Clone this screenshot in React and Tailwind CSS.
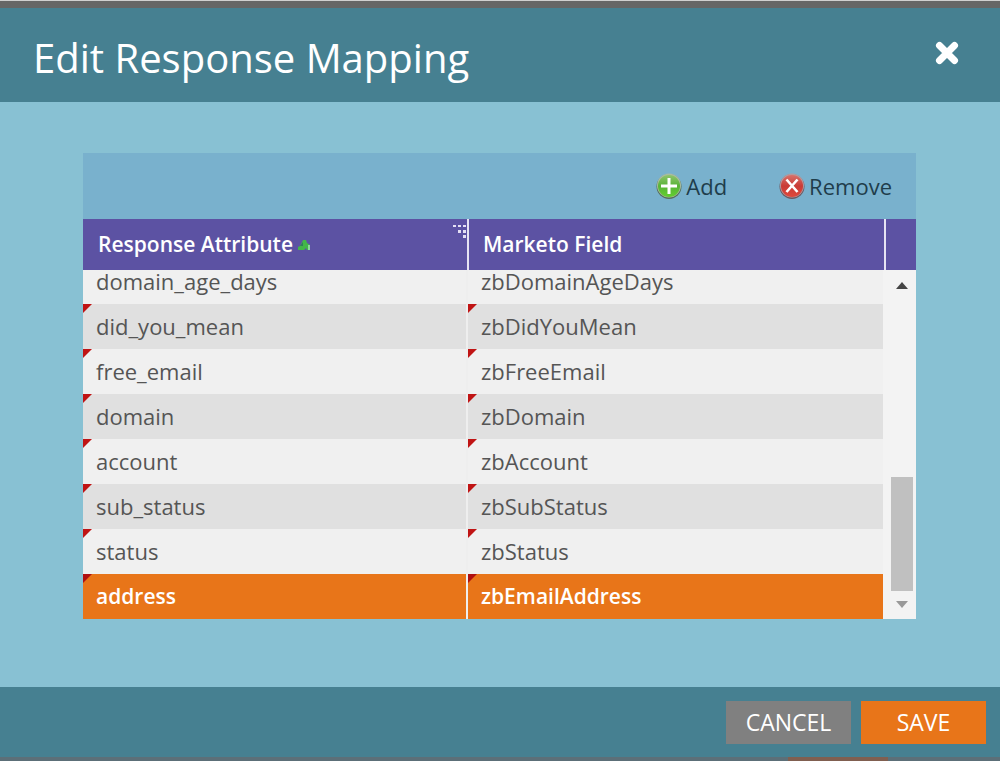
import { useState } from "react";

const mappings = [
  { attribute: "domain_age_days", field: "zbDomainAgeDays" },
  { attribute: "did_you_mean", field: "zbDidYouMean" },
  { attribute: "free_email", field: "zbFreeEmail" },
  { attribute: "domain", field: "zbDomain" },
  { attribute: "account", field: "zbAccount" },
  { attribute: "sub_status", field: "zbSubStatus" },
  { attribute: "status", field: "zbStatus" },
  { attribute: "address", field: "zbEmailAddress" },
];

function CloseIcon() {
  return (
    <svg viewBox="0 0 24 24" className="w-6 h-6" stroke="#fff" strokeWidth="7" strokeLinecap="round">
      <path d="M4.5 4.5l15 15M19.5 4.5l-15 15" />
    </svg>
  );
}

function AddIcon() {
  return (
    <svg viewBox="0 0 26 26" className="w-[26px] h-[26px]">
      <defs>
        <linearGradient id="addFill" x1="0" y1="0" x2="0" y2="1">
          <stop offset="0" stopColor="#8fc46c" />
          <stop offset="0.5" stopColor="#57b336" />
          <stop offset="1" stopColor="#63cf30" />
        </linearGradient>
      </defs>
      <circle cx="13" cy="13.5" r="12.5" fill="#56705a" />
      <circle cx="13" cy="12.5" r="12" fill="#a9bca0" />
      <circle cx="13" cy="13" r="11" fill="url(#addFill)" />
      <path d="M13 5v16M5 13h16" stroke="#fff" strokeWidth="3" />
    </svg>
  );
}

function RemoveIcon() {
  return (
    <svg viewBox="0 0 26 26" className="w-[26px] h-[26px]">
      <defs>
        <linearGradient id="removeFill" x1="0" y1="0" x2="0" y2="1">
          <stop offset="0" stopColor="#d9716a" />
          <stop offset="0.5" stopColor="#c93c36" />
          <stop offset="1" stopColor="#e0483c" />
        </linearGradient>
      </defs>
      <circle cx="13" cy="13.5" r="12.5" fill="#6d5860" />
      <circle cx="13" cy="12.5" r="12" fill="#b39a9f" />
      <circle cx="13" cy="13" r="11" fill="url(#removeFill)" />
      <path d="M7.5 6.5l11 12.5M18.5 6.5l-11 12.5" stroke="#fff" strokeWidth="2.6" />
    </svg>
  );
}

function SortIcon() {
  return (
    <svg viewBox="0 0 14 12" className="w-[14px] h-3">
      <path d="M1 11V8l2-1 3-6h3l1 3 3 2v5h-3l-1-2-2 2z" fill="#43b649" />
      <path d="M6 3l-3 4h3z" fill="#2f7d5c" />
      <path d="M11 6h2v5h-2z" fill="#8fd6a0" />
    </svg>
  );
}

function GripIcon() {
  return (
    <svg viewBox="0 0 15 15" className="w-[15px] h-[15px]" fill="#e4e0f4">
      <path d="M1 1h3v2H1zM6 1h3v2H6zM11 1h3v2h-3zM6 6h3v3H6zM11 6h3v3h-3zM11 11h3v3h-3z" />
    </svg>
  );
}

function Columns() {
  return (
    <colgroup>
      <col className="w-[48%]" />
      <col className="w-[52%]" />
    </colgroup>
  );
}

function Cell({ selected, className, children }) {
  return (
    <td className={`relative h-[45px] pl-[13px] pb-[2px] ${className}`}>
      <span
        className={`absolute left-0 top-0 w-[9px] h-[9px] [clip-path:polygon(0_0,100%_0,0_100%)] ${
          selected ? "bg-[#b01010]" : "bg-[#c01414]"
        }`}
      />
      {children}
    </td>
  );
}

function App() {
  const [selected, setSelected] = useState("address");

  return (
    <div className="min-h-screen flex flex-col bg-[#88c1d3] font-['Open_Sans','Noto_Sans',sans-serif]">
      <div className="h-2 bg-[#666666] border-t border-[#d0d0d0]" />

      {/* Header */}
      <header className="h-[94px] bg-[#468091] flex items-center justify-between pl-[33px] pr-[41px]">
        <h1 className="text-[40px] leading-[48px] text-white pt-[6px]">Edit Response Mapping</h1>
        <button type="button" aria-label="Close" className="mb-1">
          <CloseIcon />
        </button>
      </header>

      {/* Mapping grid */}
      <main className="flex-1 pt-[51px] pb-[68px] pl-[83px] pr-[84px]">
        <div className="h-[66px] bg-[#79b1cd] flex items-center justify-end gap-[52px] pr-6 text-[22px] text-[#1f3d4b]">
          <button type="button" className="flex items-center gap-1">
            <AddIcon />
            Add
          </button>
          <button type="button" className="flex items-center gap-1">
            <RemoveIcon />
            Remove
          </button>
        </div>

        <div className="flex bg-[#5c52a3] text-[21px] text-white">
          <table className="flex-1 table-fixed">
            <Columns />
            <thead>
              <tr className="h-[51px] text-left">
                <th scope="col" className="relative pl-[15px] font-semibold border-r-2 border-[#e6e3f3]">
                  <span className="flex items-center gap-1">
                    Response Attribute
                    <SortIcon />
                  </span>
                  <span className="absolute top-[5px] right-0">
                    <GripIcon />
                  </span>
                </th>
                <th scope="col" className="pl-[14px] font-semibold border-r-2 border-[#e6e3f3]">
                  Marketo Field
                </th>
              </tr>
            </thead>
          </table>
          <div className="w-[30px]" />
        </div>

        <div className="flex h-[349px] bg-[#f3f3f3]">
          <div className="flex-1 flex items-end overflow-hidden">
            <table className="w-full table-fixed text-[22px] leading-[20px] text-[#555555]">
              <Columns />
              <tbody>
                {mappings.map((row, i) => {
                  const isSelected = row.attribute === selected;
                  const color = isSelected
                    ? "bg-[#e87519] text-white text-[21px] font-semibold"
                    : i % 2
                      ? "bg-[#e0e0e0]"
                      : "bg-[#f0f0f0]";
                  return (
                    <tr key={row.attribute} className={color} onClick={() => setSelected(row.attribute)}>
                      <Cell selected={isSelected} className="border-r-2 border-[#eeeeee]">
                        {row.attribute}
                      </Cell>
                      <Cell selected={isSelected} className="">
                        {row.field}
                      </Cell>
                    </tr>
                  );
                })}
              </tbody>
            </table>
          </div>

          {/* Scroll bar */}
          <div className="w-[33px] pl-[5px] flex flex-col items-center">
            <svg viewBox="0 0 12 7" className="w-3 h-[7px] mt-3" fill="#444444">
              <path d="M6 0l6 7H0z" />
            </svg>
            <div className="flex-1" />
            <div className="w-[22px] h-[114px] bg-[#c0c0c0]" />
            <svg viewBox="0 0 12 7" className="w-3 h-[7px] mt-[10px] mb-[11px]" fill="#999999">
              <path d="M0 0h12L6 7z" />
            </svg>
          </div>
        </div>
      </main>

      {/* Footer */}
      <footer className="h-[70px] bg-[#468091] flex items-center justify-end gap-[10px] pr-[14px] text-[23px] text-white">
        <button type="button" className="w-[125px] h-[43px] bg-[#808080]">
          CANCEL
        </button>
        <button type="button" className="w-[125px] h-[43px] bg-[#e87519]">
          SAVE
        </button>
      </footer>
      <div className="h-1 bg-[#5c6f78] flex justify-end pr-[112px]">
        <div className="w-[100px] bg-[#805f50]" />
      </div>
    </div>
  );
}

export default App;
